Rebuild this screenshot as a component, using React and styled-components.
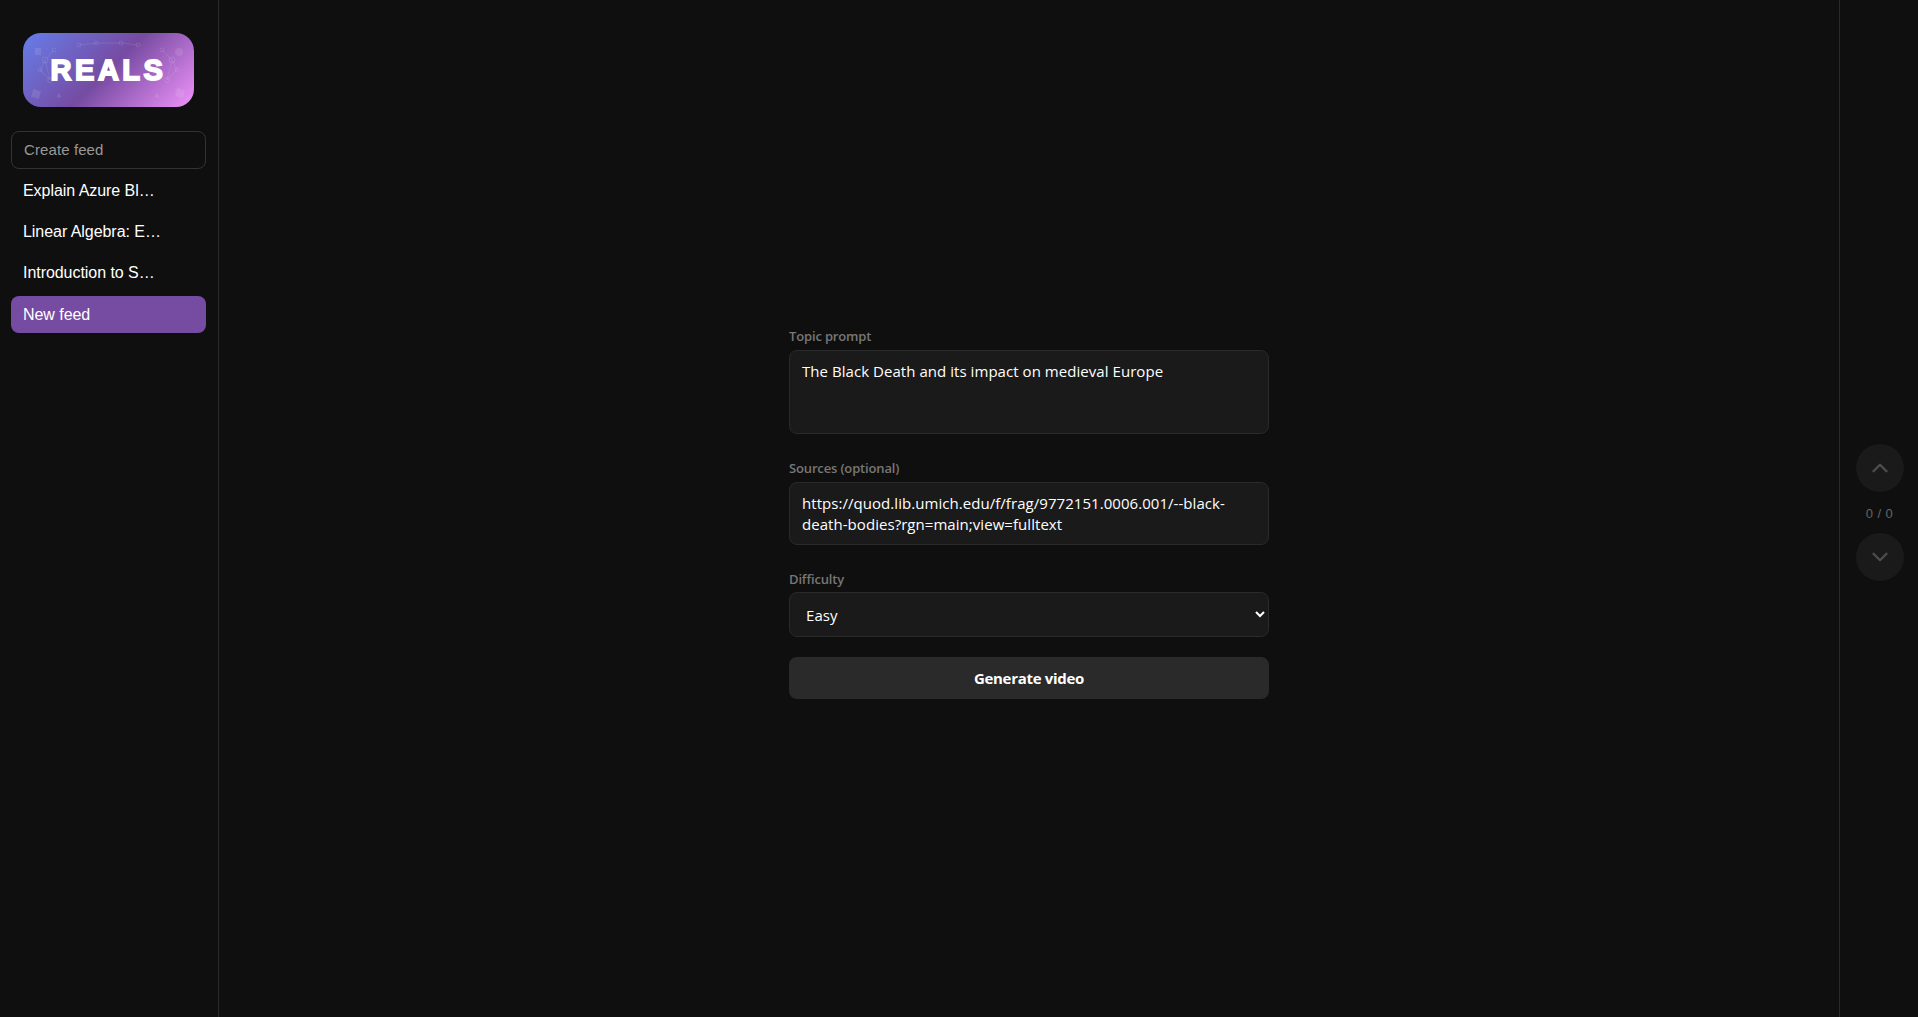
import styled, { createGlobalStyle } from 'styled-components';
import { ChevronUp, ChevronDown } from 'lucide-react';

const GlobalStyle = createGlobalStyle`
  * {
    box-sizing: border-box;
  }

  html, body {
    margin: 0;
    height: 100%;
    background: #0f0f0f;
  }
`;

const Page = styled.div`
  display: flex;
  height: 100vh;
  overflow: hidden;
  background: #0f0f0f;
  color: #fff;
  font-family: 'Liberation Sans', Arial, sans-serif;
`;

const Sidebar = styled.aside`
  flex: 0 0 219px;
  display: flex;
  flex-direction: column;
  padding: 33px 12px 0 11px;
  border-right: 1px solid #2a2a2a;
`;

const Logo = styled.div`
  position: relative;
  align-self: center;
  width: 171px;
  height: 74px;
  margin-bottom: 24px;
  border-radius: 18px;
  overflow: hidden;
  background: linear-gradient(135deg, #667eea 0%, #764ba2 50%, #f093fb 100%);
  display: flex;
  align-items: center;
  justify-content: center;
`;

const LogoArt = styled.svg`
  position: absolute;
  inset: 0;
`;

const LogoText = styled.span`
  position: relative;
  font-size: 29px;
  font-weight: 700;
  letter-spacing: 3.5px;
  color: #fff;
  -webkit-text-stroke: 1.8px #fff;
`;

const CreateButton = styled.button`
  height: 38px;
  padding: 0 12px 2px;
  text-align: left;
  background: transparent;
  border: 1px solid #333;
  border-radius: 8px;
  color: #999;
  font: 15px 'Liberation Sans', Arial, sans-serif;
  letter-spacing: 0.1px;
`;

const FeedList = styled.div`
  display: flex;
  flex-direction: column;
  gap: 4px;
  margin-top: 4px;
`;

const FeedItem = styled.div`
  height: 37px;
  line-height: ${(p) => (p.$active ? 37 : 36)}px;
  padding: 0 12px;
  border-radius: 8px;
  font-size: 16px;
  letter-spacing: -0.05px;
  background: ${(p) => (p.$active ? '#764ba2' : 'transparent')};
`;

const Main = styled.main`
  flex: 1;
  display: flex;
  justify-content: center;
  padding-top: 328px;
`;

const Form = styled.form`
  width: 480px;
  display: flex;
  flex-direction: column;
  font-family: 'Open Sans', 'Noto Sans', sans-serif;
`;

const Label = styled.label`
  display: block;
  height: ${(p) => p.$height || 22}px;
  line-height: 16px;
  font-size: 13px;
  font-weight: 600;
  letter-spacing: -0.15px;
  color: #777;
`;

const fieldStyles = `
  display: block;
  width: 100%;
  background: #1a1a1a;
  border: 1px solid #2a2a2a;
  border-radius: 8px;
  color: #fff;
  font-family: 'Open Sans', 'Noto Sans', sans-serif;
  font-size: 15px;
  letter-spacing: 0.05px;
  outline: none;
`;

const TextArea = styled.textarea`
  ${fieldStyles}
  height: ${(p) => p.$height}px;
  margin-bottom: 26px;
  padding: 10px 12px;
  line-height: 21px;
  resize: none;
  overflow: hidden;
`;

const Select = styled.select`
  ${fieldStyles}
  height: 45px;
  margin-bottom: 20px;
  padding: 0 12px;
`;

const Submit = styled.button`
  height: 42px;
  background: #2a2a2a;
  border: 0;
  border-radius: 8px;
  color: #fff;
  font-family: 'Open Sans', 'Noto Sans', sans-serif;
  font-size: 15px;
  font-weight: 700;
  letter-spacing: -0.3px;
`;

const Pager = styled.aside`
  flex: 0 0 79px;
  display: flex;
  flex-direction: column;
  align-items: center;
  justify-content: center;
  gap: 12px;
  padding-left: 1px;
  padding-top: 8px;
  border-left: 1px solid #2a2a2a;
`;

const RoundButton = styled.button`
  width: 48px;
  height: 48px;
  display: flex;
  align-items: center;
  justify-content: center;
  padding: 0;
  border: 0;
  border-radius: 50%;
  background: #1a1a1a;
  color: #4d4d4d;
`;

const Counter = styled.div`
  height: 17px;
  font-size: 13px;
  line-height: 19px;
  letter-spacing: 0.4px;
  color: #666;
`;

const feeds = ['Explain Azure Bl…', 'Linear Algebra: E…', 'Introduction to S…'];

const App = () => {
  return (
    <Page>
      <GlobalStyle />
      <Sidebar>
        <Logo>
          <LogoArt width="171" height="74" viewBox="0 0 171 74" fill="none" stroke="#fff" strokeOpacity="0.1">
            <path d="M56 12l17-2 25 0 17 2" />
            <circle cx="56" cy="12" r="2" />
            <circle cx="73" cy="10" r="2" />
            <circle cx="98" cy="10" r="2" />
            <circle cx="115" cy="12" r="2" />
            <path d="M31 17l-9 10-5 10 10 10-5-20" />
            <circle cx="31" cy="17" r="2" />
            <circle cx="22" cy="27" r="3" />
            <circle cx="17" cy="37" r="2" />
            <circle cx="27" cy="47" r="2.500" />
            <path d="M139 17l10 10 5 10-10 10 5-20" />
            <circle cx="139" cy="17" r="2" />
            <circle cx="149" cy="27" r="3" />
            <circle cx="154" cy="37" r="2" />
            <circle cx="144" cy="47" r="2.500" />
            <g fill="#fff" fillOpacity="0.1" stroke="none">
              <rect x="12" y="15" width="6" height="7" />
              <circle cx="156" cy="19" r="4" />
              <rect x="9" y="57" width="8" height="8" transform="rotate(15 13 61)" />
              <rect x="153" y="56" width="8" height="8" transform="rotate(15 157 60)" />
              <path d="M33.500 64.500h5l-2.500-5zM131.500 64.500h5l-2.500-5z" />
            </g>
          </LogoArt>
          <LogoText>REALS</LogoText>
        </Logo>
        <CreateButton type="button">Create feed</CreateButton>
        <FeedList>
          {feeds.map((feed) => (
            <FeedItem key={feed}>{feed}</FeedItem>
          ))}
          <FeedItem $active>New feed</FeedItem>
        </FeedList>
      </Sidebar>

      <Main>
        <Form>
          <Label>Topic prompt</Label>
          <TextArea $height={84} defaultValue="The Black Death and its impact on medieval Europe" />
          <Label>Sources (optional)</Label>
          <TextArea
            $height={63}
            defaultValue="https://quod.lib.umich.edu/f/frag/9772151.0006.001/--black-death-bodies?rgn=main;view=fulltext"
          />
          <Label $height={21}>Difficulty</Label>
          <Select defaultValue="easy">
            <option value="easy">Easy</option>
            <option value="medium">Medium</option>
            <option value="hard">Hard</option>
          </Select>
          <Submit type="button">Generate video</Submit>
        </Form>
      </Main>

      <Pager>
        <RoundButton type="button">
          <ChevronUp size={26} strokeWidth={2.2} />
        </RoundButton>
        <Counter>0 / 0</Counter>
        <RoundButton type="button">
          <ChevronDown size={26} strokeWidth={2.2} />
        </RoundButton>
      </Pager>
    </Page>
  );
};

export default App;
